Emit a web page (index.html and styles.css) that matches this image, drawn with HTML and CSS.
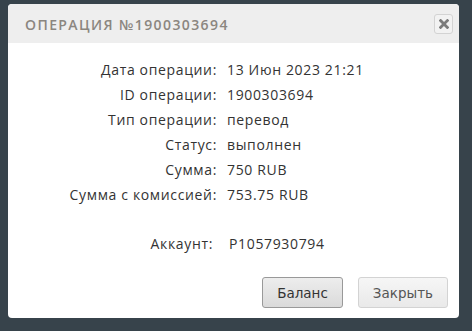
FILE: index.html
```html
<!DOCTYPE html>
<html lang="ru">
<head>
<meta charset="utf-8">
<title>Операция</title>
<link rel="stylesheet" href="styles.css">
</head>
<body>
<div class="dialog">
  <div class="header">
    <span class="title">Операция №1900303694</span>
    <button class="close" aria-label="Закрыть">
      <svg width="10" height="10" viewBox="0 0 10 10"><path d="M1.6 1.6 L8.4 8.4 M8.4 1.6 L1.6 8.4" stroke="#7c7c7c" stroke-width="2.8" stroke-linecap="square"/></svg>
    </button>
  </div>
  <div class="content">
    <div class="info">
      <div class="label">Дата операции:</div><div class="value">13 Июн 2023 21:21</div>
      <div class="label">ID операции:</div><div class="value">1900303694</div>
      <div class="label">Тип операции:</div><div class="value">перевод</div>
      <div class="label">Статус:</div><div class="value">выполнен</div>
      <div class="label">Сумма:</div><div class="value">750 RUB</div>
      <div class="label">Сумма с комиссией:</div><div class="value">753.75 RUB</div>
    </div>
    <div class="account">
      <div class="label">Аккаунт:</div><div class="value">P1057930794</div>
    </div>
  </div>
  <div class="buttons">
    <button class="btn btn-active">Баланс</button>
    <button class="btn">Закрыть</button>
  </div>
</div>
</body>
</html>
```
FILE: styles.css
```css
html, body {
  margin: 0;
  padding: 0;
  background: #37434b;
  height: 100%;
}
body {
  padding-top: 4px;
  padding-left: 8px;
  box-sizing: border-box;
}
.dialog {
  width: 451px;
  height: 314px;
  background: #ffffff;
  border-radius: 4px;
  overflow: hidden;
  display: flex;
  flex-direction: column;
}
.header {
  height: 39px;
  background: #eeeeee;
  display: flex;
  align-items: center;
  justify-content: space-between;
  padding: 0 6px 0 17px;
  flex-shrink: 0;
}
.title {
  font-family: "Open Sans", sans-serif;
  font-size: 14px;
  text-transform: uppercase;
  letter-spacing: 1.4px;
  color: #8b8680;
  font-weight: 600;
  margin-top: 1px;
}
.close {
  width: 19px;
  height: 20px;
  margin-top: 1px;
  padding: 0;
  border: 1px solid #d3d3d3;
  border-radius: 3px;
  background: #f2f2f2;
  display: flex;
  align-items: center;
  justify-content: center;
}
.content {
  padding-top: 14px;
  font-family: "Open Sans", sans-serif;
  font-size: 14px;
  letter-spacing: 0.65px;
  color: #333;
  flex: 1;
}
.info {
  display: grid;
  grid-template-columns: 209px auto;
  column-gap: 10px;
  grid-auto-rows: 25px;
  align-items: center;
}
.account {
  margin-top: 24px;
  display: grid;
  grid-template-columns: 205px auto;
  column-gap: 16px;
  grid-auto-rows: 25px;
  align-items: center;
}
.label {
  text-align: right;
}
.buttons {
  display: flex;
  justify-content: flex-end;
  gap: 15px;
  padding: 0 11px 10px 0;
}
.btn {
  height: 31px;
  min-width: 80px;
  padding: 0 14px;
  font-family: "DejaVu Sans", sans-serif;
  font-size: 13.5px;
  color: #555;
  border: 1px solid #d3d3d3;
  border-radius: 3px;
  background: linear-gradient(#f6f6f6, #e9e9e9);
}
.btn-active {
  color: #333;
  border-color: #999;
  background: linear-gradient(#ededed, #dadada);
}
```
